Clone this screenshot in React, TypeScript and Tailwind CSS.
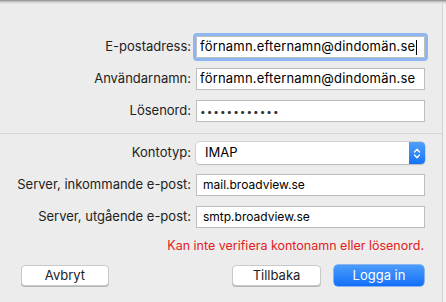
import React from "react";

function Field({ children, focused }: { children: React.ReactNode; focused?: boolean }) {
  return (
    <div
      className={
        "h-[22px] bg-white border border-[#bdbdbd] flex items-center " +
        (focused ? "outline-[3px] outline outline-[#8db7f2] rounded-[1px]" : "")
      }
    >
      {children}
    </div>
  );
}

function Label({ children }: { children: React.ReactNode }) {
  return <div className="h-[22px] flex items-center justify-end text-[13px] text-[#222]">{children}</div>;
}

function Stepper() {
  return (
    <div className="w-[16px] h-full rounded-r-[4px] bg-gradient-to-b from-[#4fa1fb] to-[#1373f9] flex items-center justify-center">
      <svg width="8" height="13" viewBox="0 0 8 13" fill="none" stroke="white" strokeWidth="1.3" strokeLinecap="round" strokeLinejoin="round">
        <path d="M1.5 5 L4 2.3 L6.5 5" />
        <path d="M1.5 8 L4 10.7 L6.5 8" />
      </svg>
    </div>
  );
}

function Button({ children, primary, className }: { children: React.ReactNode; primary?: boolean; className?: string }) {
  return (
    <div
      className={
        "h-[21px] rounded-[4px] flex items-center justify-center text-[13px] " +
        (primary
          ? "bg-gradient-to-b from-[#4a9cfb] to-[#0f6ffa] text-white shadow-[0_0_0_0.5px_#2a7cf0]"
          : "bg-white text-[#222] border border-[#c9c9c9] shadow-[0_1px_0_#b5b5b5]") +
        " " +
        (className ?? "")
      }
    >
      {children}
    </div>
  );
}

export default function App() {
  return (
    <div className="relative w-[446px] h-[302px] bg-[#f2f2f2] font-['Inter','Liberation_Sans',Arial,sans-serif] overflow-hidden">
      {/* top shadow */}
      <div className="absolute top-0 left-0 right-0 h-[4px] bg-gradient-to-b from-[#8a8a8a] via-[#cfcfcf] to-[#ececec] z-10" />

      <div className="w-[443px] h-full bg-[#ececec] border-r border-[#d2d2d2] flex flex-col">
        {/* account fields */}
        <div className="grid grid-cols-[191px_229px] gap-x-[5px] gap-y-[10px] pt-[36px] pb-[11px]">
          <Label>E-postadress:</Label>
          <Field focused>
            <span className="pl-[3px] text-[13px] tracking-[0.2px] text-black">förnamn.efternamn@dindomän.se</span>
            <span className="w-px h-[15px] bg-black ml-[1px]" />
          </Field>

          <Label>Användarnamn:</Label>
          <Field>
            <span className="pl-[3px] text-[13px] tracking-[0.2px] text-black">förnamn.efternamn@dindomän.se</span>
          </Field>

          <Label>Lösenord:</Label>
          <Field>
            <span className="pl-[3px] text-[10px] tracking-[1px] text-[#333]">••••••••••••</span>
          </Field>
        </div>

        <div className="h-px bg-[#d6d6d6]" />

        {/* server fields */}
        <div className="grid grid-cols-[191px_229px] gap-x-[5px] gap-y-[10px] pt-[8px]">
          <Label>Kontotyp:</Label>
          <div className="h-[22px] bg-white rounded-[4px] shadow-[0_0_0_0.5px_#b8b8b8,0_1px_1px_#c4c4c4] flex items-center justify-between">
            <span className="pl-[9px] text-[13px] text-black">IMAP</span>
            <Stepper />
          </div>

          <Label>Server, inkommande e-post:</Label>
          <Field>
            <span className="pl-[6px] text-[12px] text-black">mail.broadview.se</span>
          </Field>

          <Label>Server, utgående e-post:</Label>
          <Field>
            <span className="pl-[6px] text-[12px] text-black">smtp.broadview.se</span>
          </Field>
        </div>

        <div className="w-[424px] text-right text-[12.5px] text-[#e3201b] mt-[9px]">
          Kan inte verifiera kontonamn eller lösenord.
        </div>

        {/* buttons */}
        <div className="flex items-center mt-[9px] pl-[21px] pr-[18px]">
          <Button className="w-[88px]">Avbryt</Button>
          <div className="flex-1" />
          <Button className="w-[89px]">Tillbaka</Button>
          <Button primary className="w-[90px] ml-[13px]">Logga in</Button>
        </div>
      </div>
    </div>
  );
}
